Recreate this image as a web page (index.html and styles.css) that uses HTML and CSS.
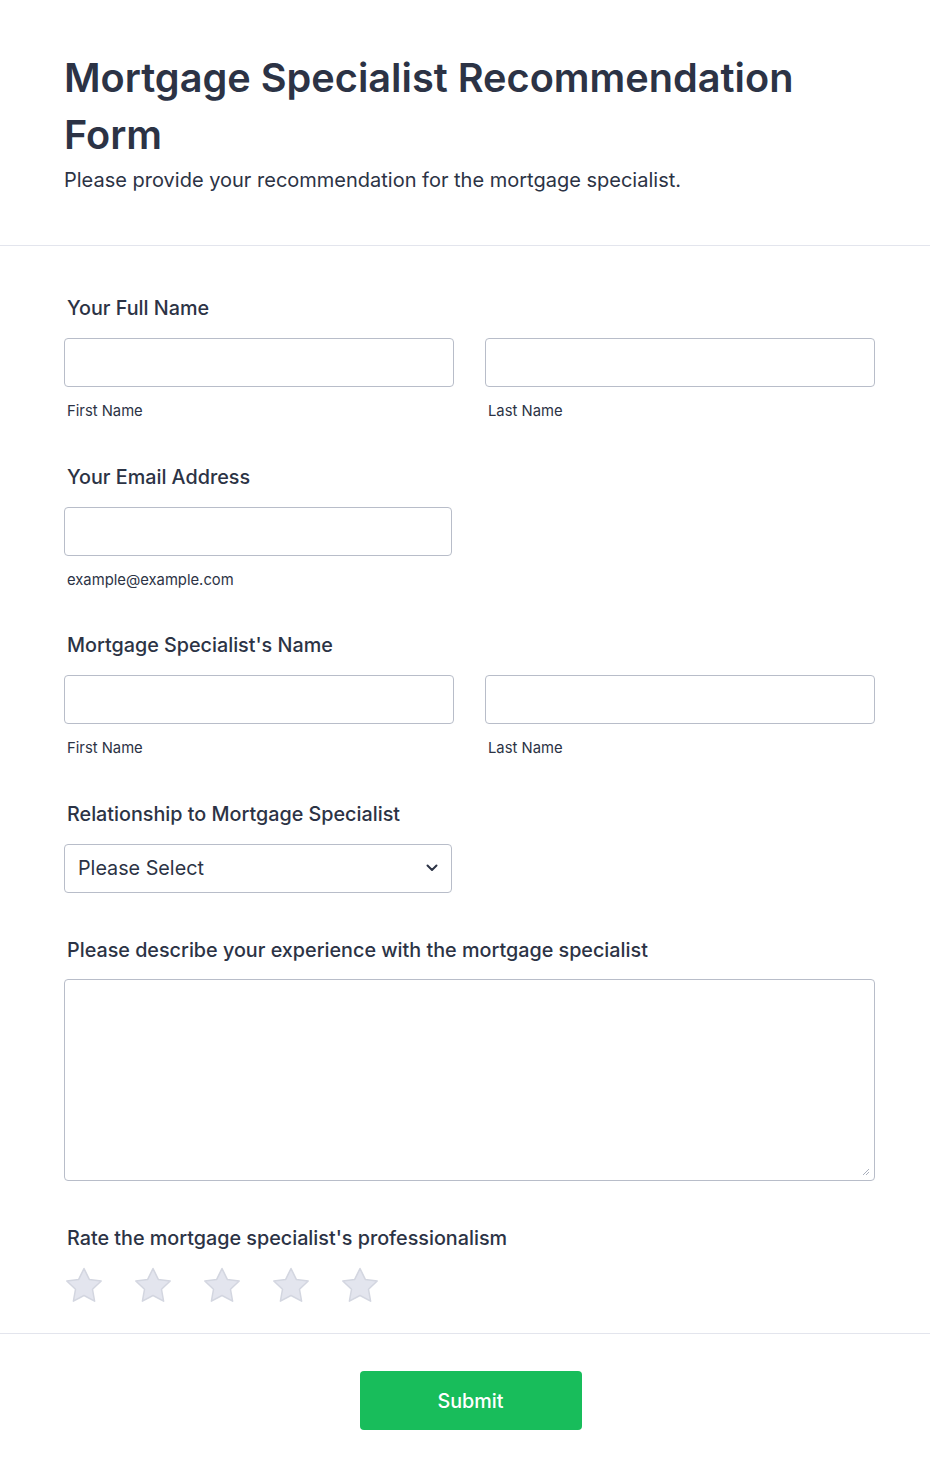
FILE: index.html
```html
<!DOCTYPE html>
<html>
<head>
<meta charset="utf-8">
<link rel="stylesheet" href="styles.css">
</head>
<body>
<div class="page">
  <header class="head">
    <h1 class="title">Mortgage Specialist Recommendation Form</h1>
    <p class="subtitle">Please provide your recommendation for the mortgage specialist.</p>
  </header>
  <main class="body">
    <div class="field">
      <div class="label">Your Full Name</div>
      <div class="row">
        <div class="col"><div class="input"></div><div class="sub">First Name</div></div>
        <div class="col"><div class="input"></div><div class="sub">Last Name</div></div>
      </div>
    </div>
    <div class="field">
      <div class="label">Your Email Address</div>
      <div class="half"><div class="input"></div><div class="sub">example@example.com</div></div>
    </div>
    <div class="field">
      <div class="label">Mortgage Specialist's Name</div>
      <div class="row">
        <div class="col"><div class="input"></div><div class="sub">First Name</div></div>
        <div class="col"><div class="input"></div><div class="sub">Last Name</div></div>
      </div>
    </div>
    <div class="field">
      <div class="label">Relationship to Mortgage Specialist</div>
      <div class="half">
        <div class="input select"><span>Please Select</span>
          <svg width="12" height="8" viewBox="0 0 12 8"><path d="M1.5 1.5 L6 6 L10.5 1.5" fill="none" stroke="#2c3345" stroke-width="2" stroke-linecap="round" stroke-linejoin="round"/></svg>
        </div>
      </div>
    </div>
    <div class="field field-ta">
      <div class="label">Please describe your experience with the mortgage specialist</div>
      <div class="textarea">
        <svg class="grip" width="10" height="10" viewBox="0 0 10 10"><path d="M9 3 L3 9 M9 6 L6 9" stroke="#aab0bd" stroke-width="1" fill="none"/></svg>
      </div>
    </div>
    <div class="field field-rate">
      <div class="label">Rate the mortgage specialist's professionalism</div>
      <div class="stars">
        <svg class="star" width="40" height="38" viewBox="0 0 40 38"><path d="M20 2.5 L25.3 13.4 L37.2 15 L28.5 23.3 L30.6 35.2 L20 29.5 L9.4 35.2 L11.5 23.3 L2.8 15 L14.7 13.4 Z" fill="#e3e5ee" stroke="#d3d6e0" stroke-width="1.5" stroke-linejoin="round"/></svg>
        <svg class="star" width="40" height="38" viewBox="0 0 40 38"><path d="M20 2.5 L25.3 13.4 L37.2 15 L28.5 23.3 L30.6 35.2 L20 29.5 L9.4 35.2 L11.5 23.3 L2.8 15 L14.7 13.4 Z" fill="#e3e5ee" stroke="#d3d6e0" stroke-width="1.5" stroke-linejoin="round"/></svg>
        <svg class="star" width="40" height="38" viewBox="0 0 40 38"><path d="M20 2.5 L25.3 13.4 L37.2 15 L28.5 23.3 L30.6 35.2 L20 29.5 L9.4 35.2 L11.5 23.3 L2.8 15 L14.7 13.4 Z" fill="#e3e5ee" stroke="#d3d6e0" stroke-width="1.5" stroke-linejoin="round"/></svg>
        <svg class="star" width="40" height="38" viewBox="0 0 40 38"><path d="M20 2.5 L25.3 13.4 L37.2 15 L28.5 23.3 L30.6 35.2 L20 29.5 L9.4 35.2 L11.5 23.3 L2.8 15 L14.7 13.4 Z" fill="#e3e5ee" stroke="#d3d6e0" stroke-width="1.5" stroke-linejoin="round"/></svg>
        <svg class="star" width="40" height="38" viewBox="0 0 40 38"><path d="M20 2.5 L25.3 13.4 L37.2 15 L28.5 23.3 L30.6 35.2 L20 29.5 L9.4 35.2 L11.5 23.3 L2.8 15 L14.7 13.4 Z" fill="#e3e5ee" stroke="#d3d6e0" stroke-width="1.5" stroke-linejoin="round"/></svg>
      </div>
    </div>
  </main>
  <footer class="foot">
    <button class="submit">Submit</button>
  </footer>
</div>
</body>
</html>
```
FILE: styles.css
```css
* { box-sizing: border-box; }
html, body { margin: 0; padding: 0; background: #fff; }
body { font-family: Inter, "Noto Sans", sans-serif; color: #2c3345; }
.page { width: 930px; }
.head { padding: 50px 55px 51px 64px; border-bottom: 1px solid #e3e5ed; }
.title { margin: 0; font-size: 39.7px; line-height: 57px; font-weight: 600; color: #2c3345; }
.subtitle { margin: 3px 0 0; font-size: 20px; line-height: 27px; color: #2c3345; }
.body { padding: 49px 55px 29px 64px; border-bottom: 1px solid #e3e5ed; }
.field { margin-bottom: 42.5px; }
.label { padding-left: 3px; font-size: 19.75px; line-height: 26px; font-weight: 500; color: #2c3345; margin-bottom: 17px; }
.row { display: flex; gap: 31px; }
.col { width: 390px; }
.half { width: 388px; }
.input { height: 49px; border: 1px solid #b8bdc9; border-radius: 4px; background: #fff; }
.sub { padding-left: 3px; margin-top: 14px; font-size: 14.8px; line-height: 20px; color: #2c3345; }
.select { display: flex; align-items: center; justify-content: space-between; padding: 0 13px 0 13px; font-size: 19.75px; color: #2c3345; }
.field-ta { margin-top: 44.5px; }
.field-ta .label { margin-bottom: 16px; }
.textarea { position: relative; height: 202px; border: 1px solid #b8bdc9; border-radius: 4px; }
.grip { position: absolute; right: 4px; bottom: 4px; }
.field-rate { margin-top: 44px; margin-bottom: 0; }
.field-rate .label { margin-bottom: 15px; }
.stars { display: flex; gap: 29px; }
.star { display: block; }
.foot { display: flex; justify-content: center; padding: 37px 53px 50px 64px; }
.submit { width: 222px; height: 59px; border: none; border-radius: 4px; background: #18bd5b; color: #fff; font-family: Inter, sans-serif; font-size: 19.75px; font-weight: 500; }
```
